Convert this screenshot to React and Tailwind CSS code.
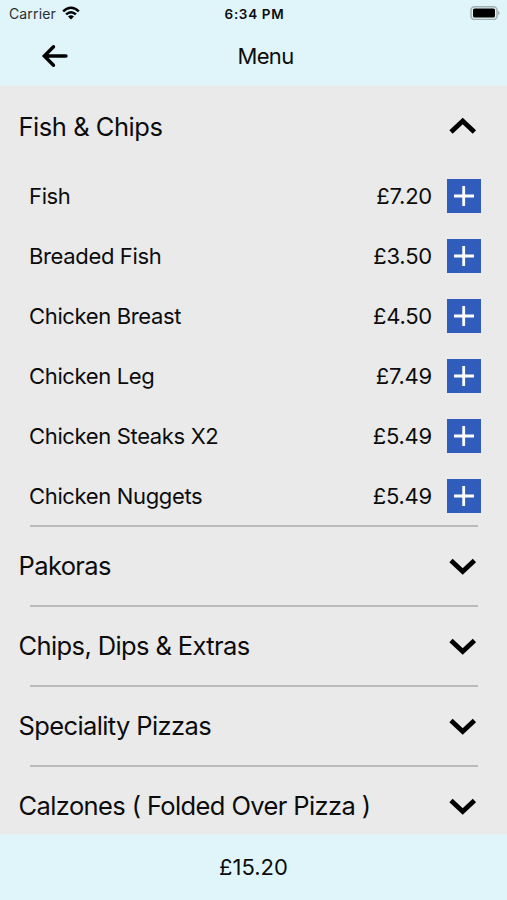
import React, { useState } from 'react';

const SECTIONS = [
  {
    name: 'Fish & Chips',
    items: [
      { name: 'Fish', price: 7.2 },
      { name: 'Breaded Fish', price: 3.5 },
      { name: 'Chicken Breast', price: 4.5 },
      { name: 'Chicken Leg', price: 7.49 },
      { name: 'Chicken Steaks X2', price: 5.49 },
      { name: 'Chicken Nuggets', price: 5.49 },
    ],
  },
  { name: 'Pakoras', items: [] },
  { name: 'Chips, Dips & Extras', items: [] },
  { name: 'Speciality Pizzas', items: [] },
  { name: 'Calzones ( Folded Over Pizza )', items: [] },
];

const Chevron = ({ open }) => (
  <svg width="28" height="18" viewBox="0 0 28 18" fill="none" stroke="#000" strokeWidth="4.8">
    <path d={open ? 'M2 15 13.7 4 25.4 15' : 'M2 3.5 13.7 14.5 25.4 3.5'} />
  </svg>
);

export default function App() {
  const [openSection, setOpenSection] = useState('Fish & Chips');
  const [total, setTotal] = useState(15.2);

  return (
    <div className="flex h-screen w-full flex-col overflow-hidden whitespace-nowrap bg-[#eaeaea] font-['Inter','Liberation_Sans',sans-serif] text-[#0c0c0c]">
      <header className="h-[86px] shrink-0 bg-[#dff5fa]">
        <div className="grid h-7 grid-cols-3 items-center pl-[9px] pr-[7px]">
          <div className="flex items-center gap-1.5">
            <span className="text-[14px] leading-7 tracking-[0.01em] text-[#2a3032]">Carrier</span>
            <svg className="-mt-0.5" width="18" height="14" viewBox="0 0 18 14">
              <path d="M.3 4.4Q9-3.4 17.7 4.4L16 6.2Q9 0 2 6.2Z" />
              <path d="M3.2 7.4Q9 2.4 14.8 7.4L13 9.2Q9 5.8 5 9.2Z" />
              <path d="M6 10.4Q9 8 12 10.4L9 13.6Z" />
            </svg>
          </div>
          <span className="text-center text-[13.5px] font-semibold tracking-[0.05em]">6:34 PM</span>
          <svg className="-mt-0.5 justify-self-end" width="30" height="14" viewBox="0 0 30 14">
            <rect x="1" y="0.8" width="26" height="12.6" rx="3.5" fill="none" stroke="#a3b0b2" strokeWidth="1.5" />
            <rect x="3" y="2.6" width="22" height="9" rx="1.5" />
            <path d="M28 4.5q3 2.5 0 5z" fill="#a3b0b2" />
          </svg>
        </div>
        <div className="grid h-14 grid-cols-3 items-center">
          <button className="ml-[41px] w-7" aria-label="Back">
            <svg width="28" height="24" viewBox="0 0 28 24" fill="none" stroke="#000" strokeWidth="3.4" strokeLinecap="round">
              <path d="M25 12H4M12.5 2.7 3.3 12l9.2 9.3" />
            </svg>
          </button>
          <h1 className="pl-6 text-center text-[22px] tracking-[-0.03em]">Menu</h1>
        </div>
      </header>

      <main className="flex-1 overflow-hidden">
        {SECTIONS.map((section) => {
          const open = openSection === section.name;
          return (
            <section key={section.name}>
              <button
                onClick={() => setOpenSection(open ? null : section.name)}
                className="flex h-20 w-full items-center justify-between pl-[18.5px] pr-[30px]"
              >
                <span className={open ? 'mt-0.5 text-[25.5px] tracking-[-0.018em]' : 'text-[25.5px] tracking-[-0.024em]'}>
                  {section.name}
                </span>
                <Chevron open={open} />
              </button>
              {open && section.items.map((item) => (
                <div key={item.name} className="flex h-[60px] items-center pl-[29px] pr-[26px] text-[22px]">
                  <span className="tracking-[-0.016em]">{item.name}</span>
                  <span className="ml-auto mr-[15px] tracking-[-0.01em]">£{item.price.toFixed(2)}</span>
                  <button
                    onClick={() => setTotal(total + item.price)}
                    className="flex size-[34px] items-center justify-center bg-[#305dbb]"
                  >
                    <svg width="22" height="22" viewBox="0 0 22 22" stroke="#fff" strokeWidth="2.8">
                      <path d="M10.7 1v20M1 11h20" />
                    </svg>
                  </button>
                </div>
              ))}
              <div className="-my-px ml-[30px] mr-[29px] h-0.5 bg-[#bbb]" />
            </section>
          );
        })}
      </main>

      <footer className="flex h-[66px] shrink-0 items-center justify-center bg-[#dff5fa] text-[22px]">
        £{total.toFixed(2)}
      </footer>
    </div>
  );
}
